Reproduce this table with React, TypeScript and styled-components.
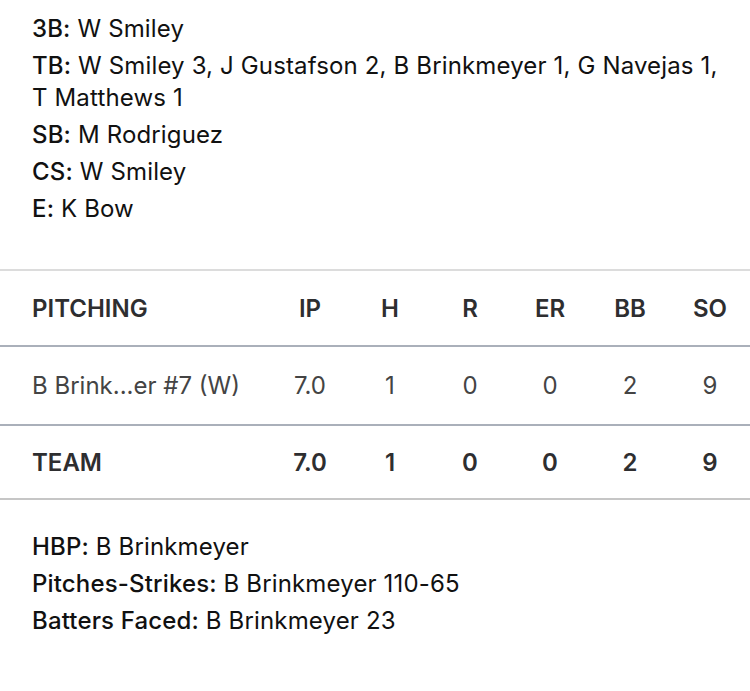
import styled, { createGlobalStyle } from 'styled-components';

const GlobalStyle = createGlobalStyle`
  html, body {
    margin: 0;
    padding: 0;
    background: #ffffff;
  }
  body {
    font-family: Inter, 'Noto Sans', 'Liberation Sans', sans-serif;
    color: #111111;
    -webkit-font-smoothing: antialiased;
  }
`;

type Note = { label: string; value: string };

const topNotes: Note[] = [
  { label: '3B', value: 'W Smiley' },
  {
    label: 'TB',
    value: 'W Smiley 3, J Gustafson 2, B Brinkmeyer 1, G Navejas 1, T Matthews 1',
  },
  { label: 'SB', value: 'M Rodriguez' },
  { label: 'CS', value: 'W Smiley' },
  { label: 'E', value: 'K Bow' },
];

const bottomNotes: Note[] = [
  { label: 'HBP', value: 'B Brinkmeyer' },
  { label: 'Pitches-Strikes', value: 'B Brinkmeyer 110-65' },
  { label: 'Batters Faced', value: 'B Brinkmeyer 23' },
];

const columns = ['IP', 'H', 'R', 'ER', 'BB', 'SO'];

const pitchers = [
  { name: 'B Brink...er #7 (W)', stats: ['7.0', '1', '0', '0', '2', '9'] },
];

const team = { name: 'TEAM', stats: ['7.0', '1', '0', '0', '2', '9'] };

const App = () => {
  return (
    <>
      <GlobalStyle />
      <Page>
        <Notes $top={13} $bottom={44}>
          {topNotes.map((n) => (
            <NoteLine key={n.label}>
              <NoteLabel>{n.label}:</NoteLabel> {n.value}
            </NoteLine>
          ))}
        </Notes>

        <Table>
          <HeaderRow>
            <NameCell>PITCHING</NameCell>
            {columns.map((c) => (
              <StatCell key={c}>{c}</StatCell>
            ))}
          </HeaderRow>
          {pitchers.map((p) => (
            <BodyRow key={p.name}>
              <NameCell>{p.name}</NameCell>
              {p.stats.map((s, i) => (
                <StatCell key={i}>{s}</StatCell>
              ))}
            </BodyRow>
          ))}
          <TotalRow>
            <NameCell>{team.name}</NameCell>
            {team.stats.map((s, i) => (
              <StatCell key={i}>{s}</StatCell>
            ))}
          </TotalRow>
        </Table>

        <Notes $top={31} $bottom={56}>
          {bottomNotes.map((n) => (
            <NoteLine key={n.label}>
              <NoteLabel>{n.label}:</NoteLabel> {n.value}
            </NoteLine>
          ))}
        </Notes>
      </Page>
    </>
  );
};

export default App;

const Page = styled.div`
  width: 750px;
  min-height: 691px;
  background: #ffffff;
`;

const Notes = styled.div<{ $top: number; $bottom: number }>`
  display: flex;
  flex-direction: column;
  gap: 5px;
  padding: ${(p) => p.$top}px 20px ${(p) => p.$bottom}px 32px;
`;

const NoteLine = styled.div`
  font-size: 24px;
  line-height: 32px;
  letter-spacing: 0.15px;
  color: #111111;
`;

const NoteLabel = styled.span`
  font-weight: 500;
`;

const Table = styled.div`
  display: flex;
  flex-direction: column;
  border-top: 2px solid #dcdcdc;
`;

const Row = styled.div`
  display: grid;
  grid-template-columns: 1fr repeat(6, 80px);
  align-items: center;
  font-size: 24px;
  border-bottom: 2px solid #aab0ba;
`;

const HeaderRow = styled(Row)`
  height: 74px;
  font-weight: 600;
  color: #2e2e30;
`;

const BodyRow = styled(Row)`
  height: 77px;
  font-weight: 400;
  color: #444444;
`;

const TotalRow = styled(Row)`
  height: 72px;
  font-weight: 600;
  color: #2e2e30;
  border-bottom-color: #c6c6c6;
`;

const NameCell = styled.div`
  padding-left: 32px;
  white-space: nowrap;
`;

const StatCell = styled.div`
  text-align: center;
`;
